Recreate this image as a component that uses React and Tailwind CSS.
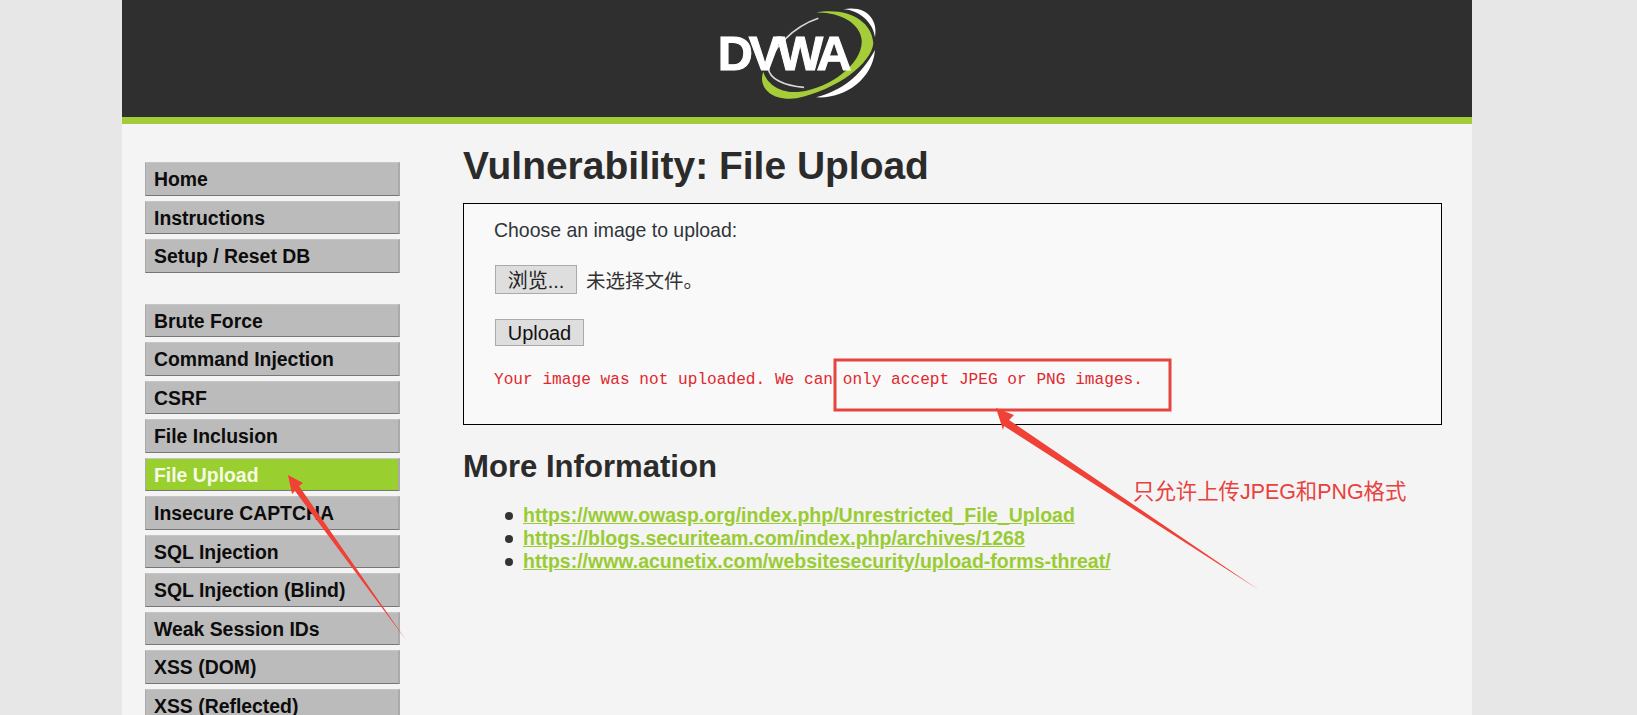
import React from 'react'

const topMenu = ['Home', 'Instructions', 'Setup / Reset DB']
const vulnMenu = [
  'Brute Force',
  'Command Injection',
  'CSRF',
  'File Inclusion',
  'File Upload',
  'Insecure CAPTCHA',
  'SQL Injection',
  'SQL Injection (Blind)',
  'Weak Session IDs',
  'XSS (DOM)',
  'XSS (Reflected)',
]
const links = [
  'https://www.owasp.org/index.php/Unrestricted_File_Upload',
  'https://blogs.securiteam.com/index.php/archives/1268',
  'https://www.acunetix.com/websitesecurity/upload-forms-threat/',
]

function Logo() {
  return (
    <svg width="234" height="117" viewBox="0 0 702 351">
      <path d="M405 38C500 20 575 60 580 130C575 190 470 270 350 295C260 305 235 250 250 215C260 250 300 282 360 275C450 265 550 190 545 120C540 70 480 35 405 38Z" fill="#a4cd39" />
      <path d="M490 28C560 15 595 60 585 112C580 70 540 30 490 28Z" fill="#ffffff" />
      <path d="M585 150C578 240 490 298 408 292C485 272 540 230 585 150Z" fill="#ffffff" />
      <path d="M415 55C340 80 270 150 265 205C268 235 310 258 372 262" fill="none" stroke="#d8d8d8" strokeWidth="5" />
      <text x="113" y="210" fontFamily="Liberation Sans, sans-serif" fontWeight="700" fontSize="146" letterSpacing="-12" fill="#ffffff" stroke="#ffffff" strokeWidth="3">DVWA</text>
    </svg>
  )
}

function MenuItem({ label }) {
  const active = label === 'File Upload'
  return (
    <li
      className={`h-[33.5px] mb-[5px] pl-2 leading-[32px] text-[19.4px] font-bold border-b border-b-[#777777] border-r-2 border-r-[#aaaaaa] border-l border-l-[#aaaaaa] border-t border-t-[#c6c6c6] ${
        active ? 'bg-[#99cf2f] text-[#f6fbe6]' : 'bg-[#bcbbbb] text-[#0c0c0c]'
      }`}
    >
      {label}
    </li>
  )
}

export default function App() {
  return (
    <div className="relative h-[715px] overflow-hidden bg-[#e7e7e7] font-['Liberation_Sans','Noto_Sans_CJK_SC',sans-serif] text-[#2b2b2b]">
      <div className="mx-[122px] w-[1350px] h-full bg-[#f4f4f4]">
        <header className="flex justify-center h-[124px] bg-[#2f2f2f] border-b-[7px] border-b-[#a2cb3a]">
          <Logo />
        </header>

        <div className="flex">
          <nav className="w-[341px] shrink-0 pl-[23px] pt-[38px]">
            <ul className="w-[255px] mb-[31px]">
              {topMenu.map((m) => (
                <MenuItem key={m} label={m} />
              ))}
            </ul>
            <ul className="w-[255px]">
              {vulnMenu.map((m) => (
                <MenuItem key={m} label={m} />
              ))}
            </ul>
          </nav>

          <main className="w-[979px]">
            <h1 className="mt-[18px] text-[38.95px] leading-[48px] font-bold">Vulnerability: File Upload</h1>

            <div className="mt-[13px] h-[222px] border border-black bg-[#f9f9f9] pl-[30px] pt-[14px]">
              <p className="text-[19.45px] leading-[24px] text-[#30353a]">Choose an image to upload:</p>
              <div className="mt-[23px] flex items-center h-[29px] pl-px">
                <button className="w-[82px] h-[29px] pt-[3px] bg-[#dedede] border border-[#aaaaaa] text-[20px] leading-[24px] text-[#222222]">浏览...</button>
                <span className="ml-[9px] pt-[4px] text-[19.5px] text-[#333333]">未选择文件。</span>
              </div>
              <button className="block mt-[25px] ml-px w-[89px] h-[27px] bg-[#dedede] border border-[#aaaaaa] text-[20px] leading-[24px] text-[#111111]">Upload</button>
              <pre className="mt-[22px] font-['Liberation_Mono',monospace] text-[16.15px] leading-[24px] text-[#e0282e]">
                Your image was not uploaded. We can only accept JPEG or PNG images.
              </pre>
            </div>

            <h2 className="mt-[24px] text-[31.1px] leading-[36px] font-bold">More Information</h2>
            <ul className="mt-[19px] pl-[42px] text-[19.5px] leading-[23px] font-bold">
              {links.map((l) => (
                <li key={l} className="flex items-center">
                  <span className="w-2 h-2 mr-[10px] rounded-full bg-[#333333]"></span>
                  <a className="text-[#99cb33] underline" href={l}>{l}</a>
                </li>
              ))}
            </ul>
          </main>
        </div>
      </div>

      {/* red annotations drawn on top of the screenshot */}
      <svg className="absolute inset-0 pointer-events-none" width="1637" height="715">
        <rect x="835" y="360" width="335" height="50" fill="none" stroke="#e5443f" strokeWidth="3" />
        <polygon points="288,475 303,483 299,486 406,640 295,491 292,494" fill="#ef4136" />
        <polygon points="996,408 1014,415 1009,420 1259,590 1004,426 1003,430" fill="#ef4136" />
      </svg>
      <span className="absolute left-[1133px] top-[478px] text-[21.4px] leading-[28px] text-[#e8423f]">只允许上传JPEG和PNG格式</span>
    </div>
  )
}
